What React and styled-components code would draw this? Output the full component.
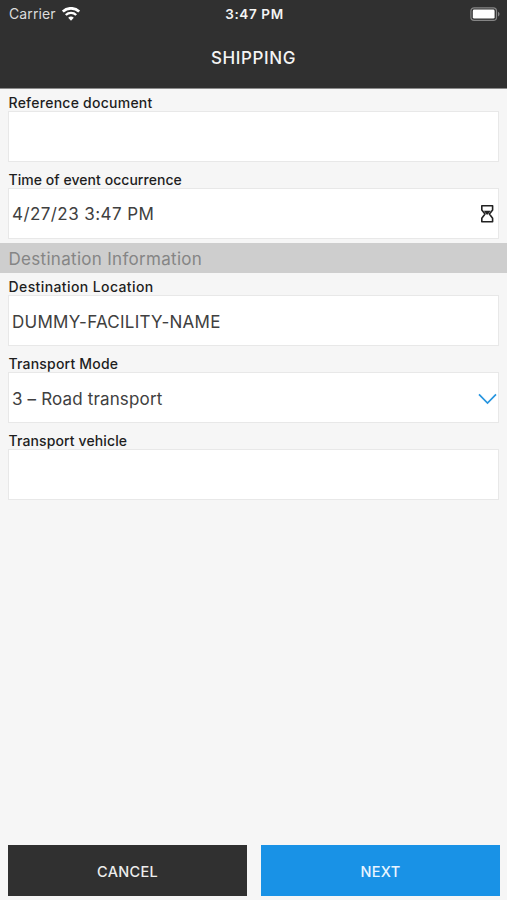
import React, { useState } from "react";
import styled, { createGlobalStyle } from "styled-components";

const GlobalStyle = createGlobalStyle`
  * {
    box-sizing: border-box;
  }
  body {
    margin: 0;
    background: #f6f6f6;
    font-family: Inter, "Liberation Sans", sans-serif;
  }
`;

const Screen = styled.div`
  display: flex;
  flex-direction: column;
  width: 507px;
  height: 900px;
  background: #f6f6f6;
`;

const Header = styled.header`
  height: 89px;
  background: #303030;
  border-bottom: 1px solid #8b8b8b;
  color: #f4f4f4;
`;

const StatusBar = styled.div`
  display: grid;
  grid-template-columns: 1fr auto 1fr;
  align-items: center;
  height: 27px;
  padding: 0 7px 0 9px;
  font-size: 14px;
`;

const Carrier = styled.div`
  display: flex;
  align-items: center;
  gap: 6px;
  color: #dcdcdc;
  letter-spacing: 0.1px;
`;

const Clock = styled.div`
  font-size: 13.5px;
  font-weight: 600;
  letter-spacing: 0.6px;
`;

const Battery = styled.svg`
  justify-self: end;
`;

const Title = styled.h1`
  margin: 0;
  line-height: 62px;
  font-size: 17px;
  font-weight: 500;
  letter-spacing: 0.6px;
  text-align: center;
`;

const Form = styled.main`
  flex: 1;
`;

const Field = styled.label`
  display: block;
  padding: 0 8px 4px;
`;

const Label = styled.span`
  display: block;
  height: 22px;
  padding-left: 0.5px;
  line-height: 27px;
  font-size: 14px;
  font-weight: 450;
  letter-spacing: ${(p) => p.$spacing ?? 0.12}px;
  color: #1e1e1e;
`;

const Box = styled.div`
  display: flex;
  align-items: center;
  justify-content: space-between;
  height: 51px;
  padding: ${(p) => p.$top ?? 2}px 1px 0 3px;
  background: #fff;
  border: 1px solid #e8e8e8;
  font-size: 17px;
  letter-spacing: ${(p) => p.$spacing ?? 0.15}px;
  color: #404040;
`;

const SectionTitle = styled.h2`
  margin: 0;
  height: 30px;
  padding-left: 8.5px;
  background: #cecece;
  line-height: 32px;
  font-size: 17px;
  font-weight: 400;
  letter-spacing: 0.3px;
  color: #858585;
`;

const Footer = styled.footer`
  display: grid;
  grid-template-columns: 1fr 1fr;
  gap: 14px;
  padding: 0 7px 4px 8px;
`;

const Button = styled.button`
  height: 51px;
  padding: 1px 0 0;
  border: 0;
  background: ${(p) => (p.$primary ? "#1992e6" : "#303030")};
  color: ${(p) => (p.$primary ? "#e8f5ff" : "#ededed")};
  font-family: inherit;
  font-size: 14.5px;
  font-weight: 500;
  letter-spacing: 0.3px;
`;

const WifiIcon = () => (
  <svg width="18" height="14" viewBox="0 0 18 14" fill="none" stroke="#fff">
    <path d="M.8 4.6a11.8 11.8 0 0 1 16.4 0" strokeWidth="2.7" />
    <path d="M3.8 8a7.5 7.5 0 0 1 10.4 0" strokeWidth="2.4" />
    <path d="M9 13.7 6.2 10.8a4 4 0 0 1 5.6 0Z" fill="#fff" stroke="none" />
  </svg>
);

const BatteryIcon = () => (
  <Battery width="30" height="14" viewBox="0 0 30 14">
    <rect x=".9" y=".8" width="25.6" height="12.6" rx="3.2" fill="none" stroke="#858585" strokeWidth="1.2" />
    <rect x="2.8" y="2.6" width="21.8" height="9" rx="1.4" fill="#fff" />
    <path d="M28 4.8c2 .8 2 3.8 0 4.6Z" fill="#858585" />
  </Battery>
);

const HourglassIcon = () => (
  <svg width="18" height="20" viewBox="0 0 18 20" fill="none" stroke="#222" strokeWidth="1.6" strokeLinejoin="round">
    <path d="M2.8 1.8h10.8v4.2L10.4 10l3.2 4.2v3.6H2.8v-3.6L6 10 2.8 6Z" />
    <path d="M4.8 6.8h6.8L8.9 10.6H7.5Z" fill="#222" stroke="none" />
  </svg>
);

const ChevronIcon = () => (
  <svg width="19" height="12" viewBox="0 0 19 12" fill="none" stroke="#2795df" strokeWidth="1.7">
    <path d="M1 1.3 9.5 10 18 1.3" />
  </svg>
);

const App = () => {
  const [form] = useState({
    time: "4/27/23 3:47 PM",
    location: "DUMMY-FACILITY-NAME",
    mode: "3 – Road transport",
  });

  return (
    <>
      <GlobalStyle />
      <Screen>
        <Header>
          <StatusBar>
            <Carrier>
              Carrier <WifiIcon />
            </Carrier>
            <Clock>3:47 PM</Clock>
            <BatteryIcon />
          </StatusBar>
          <Title>SHIPPING</Title>
        </Header>

        <Form>
          <Field>
            <Label $spacing={0.25}>Reference document</Label>
            <Box />
          </Field>
          <Field>
            <Label $spacing={0.05}>Time of event occurrence</Label>
            <Box $spacing={0.43} $top={0}>
              {form.time}
              <HourglassIcon />
            </Box>
          </Field>
          <SectionTitle>Destination Information</SectionTitle>
          <Field>
            <Label $spacing={0.4}>Destination Location</Label>
            <Box $spacing={0.25}>{form.location}</Box>
          </Field>
          <Field>
            <Label $spacing={0.2}>Transport Mode</Label>
            <Box>
              {form.mode}
              <ChevronIcon />
            </Box>
          </Field>
          <Field>
            <Label>Transport vehicle</Label>
            <Box />
          </Field>
        </Form>

        <Footer>
          <Button type="button">CANCEL</Button>
          <Button type="button" $primary>
            NEXT
          </Button>
        </Footer>
      </Screen>
    </>
  );
};

export default App;
